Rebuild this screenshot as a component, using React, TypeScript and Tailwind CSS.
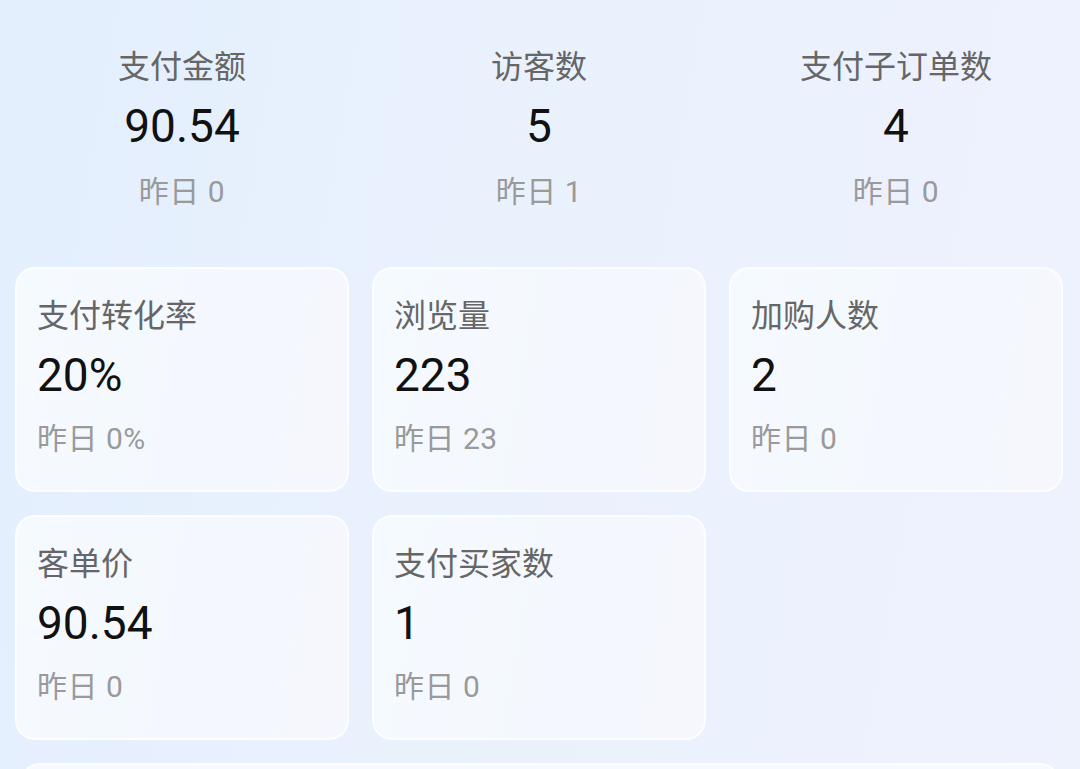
const FONT = "font-['Roboto','Noto_Sans_CJK_SC',sans-serif]";

type Stat = { label: string; value: string; prev: string };

const headline: Stat[] = [
  { label: '支付金额', value: '90.54', prev: '昨日 0' },
  { label: '访客数', value: '5', prev: '昨日 1' },
  { label: '支付子订单数', value: '4', prev: '昨日 0' },
];

const cards: Stat[] = [
  { label: '支付转化率', value: '20%', prev: '昨日 0%' },
  { label: '浏览量', value: '223', prev: '昨日 23' },
  { label: '加购人数', value: '2', prev: '昨日 0' },
  { label: '客单价', value: '90.54', prev: '昨日 0' },
  { label: '支付买家数', value: '1', prev: '昨日 0' },
];

function StatBody({ s, center }: { s: Stat; center?: boolean }) {
  return (
    <div className={`flex flex-col ${center ? 'items-center pt-[26px]' : 'items-start px-[20px] pt-[25px]'}`}>
      <div className="text-[32px] leading-[44px] text-[#666666]">{s.label}</div>
      <div className="mt-[7px] text-[46px] leading-[60px] text-[#111111]">{s.value}</div>
      <div className={`${center ? 'mt-[16px]' : 'mt-[14px]'} text-[30px] leading-[40px] tracking-[0.5px] text-[#9a9a9a]`}>
        {s.prev}
      </div>
    </div>
  );
}

export default function App() {
  return (
    <div
      className={`${FONT} h-[769px] overflow-hidden bg-[linear-gradient(100deg,#e3effd_0%,#e9f1fd_40%,#eef2fd_100%)]`}
    >
      <div className="pl-[15px] pr-[17px] pt-[19px] grid grid-cols-3 gap-[23px]">
        {headline.map((s) => (
          <div key={s.label} className="h-[225px]">
            <StatBody s={s} center />
          </div>
        ))}
        {cards.map((s) => (
          <div
            key={s.label}
            className="h-[225px] rounded-[20px] border-2 border-white/80 bg-[linear-gradient(100deg,#f5faff_0%,#f4f8fe_60%,#f5f7fd_100%)]"
          >
            <StatBody s={s} />
          </div>
        ))}
      </div>
      <div className="mx-[20px] mt-[23px] h-[200px] rounded-[20px] border-2 border-white/80 bg-[#f6f9ff]" />
    </div>
  );
}
